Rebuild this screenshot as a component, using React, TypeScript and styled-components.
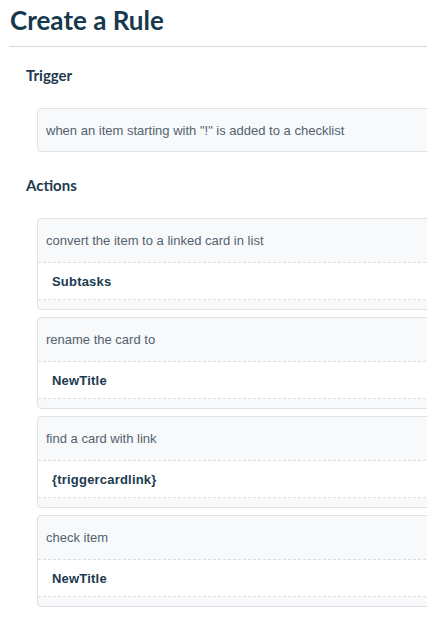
import styled, { createGlobalStyle } from "styled-components";

const GlobalStyle = createGlobalStyle`
  html, body {
    margin: 0;
    padding: 0;
    background: #ffffff;
    overflow-x: hidden;
  }
  * {
    box-sizing: border-box;
  }
`;

type Action = {
  label: string;
  value: string;
};

const actions: Action[] = [
  { label: "convert the item to a linked card in list", value: "Subtasks" },
  { label: "rename the card to", value: "NewTitle" },
  { label: "find a card with link", value: "{triggercardlink}" },
  { label: "check item", value: "NewTitle" },
];

function App() {
  return (
    <>
      <GlobalStyle />
      <Page>
        <Title>Create a Rule</Title>
        <Divider />
        <Section>
          <SectionLabel>Trigger</SectionLabel>
          <TriggerBox>when an item starting with "!" is added to a checklist</TriggerBox>
        </Section>
        <Section>
          <SectionLabel>Actions</SectionLabel>
          <CardList>
            {actions.map((action, i) => (
              <Card key={i}>
                <CardHeader>{action.label}</CardHeader>
                <CardValue>{action.value}</CardValue>
                <CardFooter />
              </Card>
            ))}
          </CardList>
        </Section>
      </Page>
    </>
  );
}

export default App;

const Page = styled.div`
  padding: 0 0 20px 9px;
  width: 100%;
`;

const Title = styled.h1`
  margin: 0;
  padding: 4px 0 0 1px;
  height: 46px;
  font-family: Lato, "Liberation Sans", sans-serif;
  font-weight: 700;
  font-size: 26px;
  line-height: 32px;
  color: #17394d;
`;

const Divider = styled.div`
  height: 1px;
  background-color: #d6d8db;
  margin-right: -20px;
`;

const Section = styled.div`
  padding-left: 17px;
`;

const SectionLabel = styled.div`
  font-family: Lato, "Liberation Sans", sans-serif;
  font-weight: 700;
  font-size: 15px;
  line-height: 20px;
  color: #1d3a4f;
  padding: 18px 0 23px 0;
`;

const TriggerBox = styled.div`
  margin-left: 11px;
  width: calc(100% + 40px);
  height: 44px;
  display: flex;
  align-items: center;
  padding-left: 8px;
  border: 1px solid #e0e2e6;
  border-radius: 4px;
  background-color: #f8f9fb;
  font-family: "Liberation Sans", Arial, sans-serif;
  font-size: 13px;
  color: #53626e;
  margin-bottom: 5px;
`;

const CardList = styled.div`
  display: flex;
  flex-direction: column;
  gap: 7px;
  margin-left: 11px;
`;

const Card = styled.div`
  width: calc(100% + 40px);
  border: 1px solid #dfe1e5;
  border-radius: 4px;
  background-color: #f8f9fb;
  overflow: hidden;
`;

const CardHeader = styled.div`
  height: 44px;
  display: flex;
  align-items: center;
  padding-left: 8px;
  font-family: "Liberation Sans", Arial, sans-serif;
  font-size: 13px;
  color: #53626e;
  border-bottom: 1px dashed #dcdee2;
`;

const CardValue = styled.div`
  height: 37px;
  display: flex;
  align-items: center;
  padding-left: 14px;
  background-color: #ffffff;
  font-family: "Liberation Sans", Arial, sans-serif;
  font-weight: 700;
  font-size: 13px;
  letter-spacing: 0.2px;
  color: #1b3a4f;
  border-bottom: 1px dashed #dcdee2;
`;

const CardFooter = styled.div`
  height: 9px;
`;
